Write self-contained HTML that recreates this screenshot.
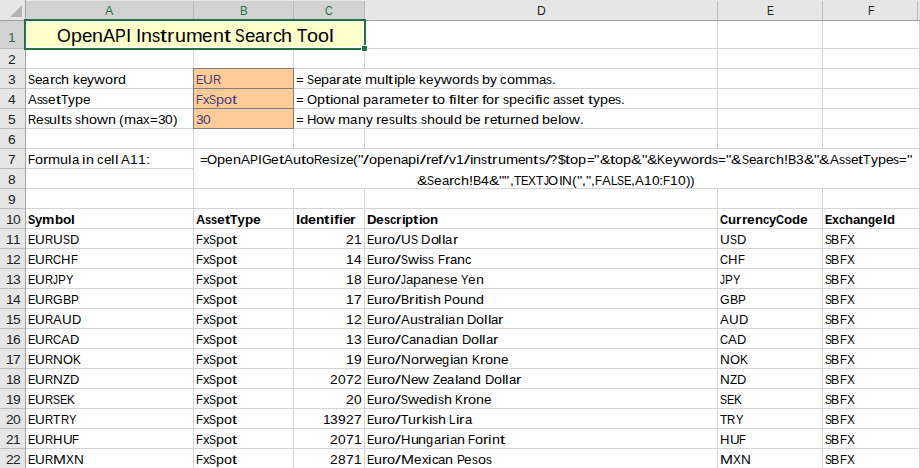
<!DOCTYPE html>
<html><head><meta charset="utf-8"><style>
html,body{margin:0;padding:0;background:#fff;}
body{width:920px;height:468px;overflow:hidden;position:relative;font-family:"Liberation Sans",sans-serif;}
.r{position:absolute;}
.t{position:absolute;white-space:nowrap;}
.t i{position:absolute;top:0;font-style:normal;transform-origin:0 0;}
</style></head><body>
<div class="r" style="left:0px;top:0px;width:920px;height:468px;background:#fff;"></div>
<div class="r" style="left:26px;top:48px;width:894px;height:1px;background:#d4d4d4;"></div>
<div class="r" style="left:26px;top:68px;width:894px;height:1px;background:#d4d4d4;"></div>
<div class="r" style="left:26px;top:88px;width:894px;height:1px;background:#d4d4d4;"></div>
<div class="r" style="left:26px;top:108px;width:894px;height:1px;background:#d4d4d4;"></div>
<div class="r" style="left:26px;top:128px;width:894px;height:1px;background:#d4d4d4;"></div>
<div class="r" style="left:26px;top:148px;width:894px;height:1px;background:#d4d4d4;"></div>
<div class="r" style="left:26px;top:168px;width:894px;height:1px;background:#d4d4d4;"></div>
<div class="r" style="left:26px;top:188px;width:894px;height:1px;background:#d4d4d4;"></div>
<div class="r" style="left:26px;top:208px;width:894px;height:1px;background:#d4d4d4;"></div>
<div class="r" style="left:26px;top:228px;width:894px;height:1px;background:#d4d4d4;"></div>
<div class="r" style="left:26px;top:248px;width:894px;height:1px;background:#d4d4d4;"></div>
<div class="r" style="left:26px;top:268px;width:894px;height:1px;background:#d4d4d4;"></div>
<div class="r" style="left:26px;top:288px;width:894px;height:1px;background:#d4d4d4;"></div>
<div class="r" style="left:26px;top:308px;width:894px;height:1px;background:#d4d4d4;"></div>
<div class="r" style="left:26px;top:328px;width:894px;height:1px;background:#d4d4d4;"></div>
<div class="r" style="left:26px;top:348px;width:894px;height:1px;background:#d4d4d4;"></div>
<div class="r" style="left:26px;top:368px;width:894px;height:1px;background:#d4d4d4;"></div>
<div class="r" style="left:26px;top:388px;width:894px;height:1px;background:#d4d4d4;"></div>
<div class="r" style="left:26px;top:408px;width:894px;height:1px;background:#d4d4d4;"></div>
<div class="r" style="left:26px;top:428px;width:894px;height:1px;background:#d4d4d4;"></div>
<div class="r" style="left:26px;top:448px;width:894px;height:1px;background:#d4d4d4;"></div>
<div class="r" style="left:193px;top:21px;width:1px;height:447px;background:#d4d4d4;"></div>
<div class="r" style="left:293px;top:21px;width:1px;height:447px;background:#d4d4d4;"></div>
<div class="r" style="left:364px;top:21px;width:1px;height:447px;background:#d4d4d4;"></div>
<div class="r" style="left:717px;top:21px;width:1px;height:447px;background:#d4d4d4;"></div>
<div class="r" style="left:822px;top:21px;width:1px;height:447px;background:#d4d4d4;"></div>
<div class="r" style="left:919px;top:21px;width:1px;height:447px;background:#d4d4d4;"></div>
<div class="r" style="left:364px;top:69px;width:1px;height:19px;background:#fff;"></div>
<div class="r" style="left:364px;top:89px;width:1px;height:19px;background:#fff;"></div>
<div class="r" style="left:364px;top:109px;width:1px;height:19px;background:#fff;"></div>
<div class="r" style="left:26px;top:21px;width:338px;height:27px;background:#ffffcc;"></div>
<div class="r" style="left:194px;top:149px;width:725px;height:39px;background:#fff;"></div>
<div class="r" style="left:193px;top:68px;width:101px;height:61px;background:#7f7f7f;"></div>
<div class="r" style="left:194px;top:69px;width:99px;height:19px;background:#ffcc99;"></div>
<div class="r" style="left:194px;top:89px;width:99px;height:19px;background:#ffcc99;"></div>
<div class="r" style="left:194px;top:109px;width:99px;height:19px;background:#ffcc99;"></div>
<div class="r" style="left:0px;top:0px;width:920px;height:20px;background:#e6e6e6;"></div>
<div class="r" style="left:26px;top:1px;width:338px;height:18px;background:#d2d2d2;"></div>
<div class="r" style="left:0px;top:20px;width:920px;height:1px;background:#a2a2a2;"></div>
<div class="r" style="left:193px;top:1px;width:1px;height:19px;background:#bababa;"></div>
<div class="r" style="left:293px;top:1px;width:1px;height:19px;background:#bababa;"></div>
<div class="r" style="left:364px;top:1px;width:1px;height:19px;background:#bababa;"></div>
<div class="r" style="left:717px;top:1px;width:1px;height:19px;background:#bababa;"></div>
<div class="r" style="left:822px;top:1px;width:1px;height:19px;background:#bababa;"></div>
<div class="r" style="left:917px;top:1px;width:1px;height:19px;background:#bababa;"></div>
<div class="r" style="left:0px;top:21px;width:25px;height:447px;background:#e6e6e6;"></div>
<div class="r" style="left:0px;top:21px;width:25px;height:27px;background:#d2d2d2;"></div>
<div class="r" style="left:25px;top:0px;width:1px;height:468px;background:#a2a2a2;"></div>
<div class="r" style="left:0px;top:48px;width:25px;height:1px;background:#bababa;"></div>
<div class="r" style="left:0px;top:68px;width:25px;height:1px;background:#bababa;"></div>
<div class="r" style="left:0px;top:88px;width:25px;height:1px;background:#bababa;"></div>
<div class="r" style="left:0px;top:108px;width:25px;height:1px;background:#bababa;"></div>
<div class="r" style="left:0px;top:128px;width:25px;height:1px;background:#bababa;"></div>
<div class="r" style="left:0px;top:148px;width:25px;height:1px;background:#bababa;"></div>
<div class="r" style="left:0px;top:168px;width:25px;height:1px;background:#bababa;"></div>
<div class="r" style="left:0px;top:188px;width:25px;height:1px;background:#bababa;"></div>
<div class="r" style="left:0px;top:208px;width:25px;height:1px;background:#bababa;"></div>
<div class="r" style="left:0px;top:228px;width:25px;height:1px;background:#bababa;"></div>
<div class="r" style="left:0px;top:248px;width:25px;height:1px;background:#bababa;"></div>
<div class="r" style="left:0px;top:268px;width:25px;height:1px;background:#bababa;"></div>
<div class="r" style="left:0px;top:288px;width:25px;height:1px;background:#bababa;"></div>
<div class="r" style="left:0px;top:308px;width:25px;height:1px;background:#bababa;"></div>
<div class="r" style="left:0px;top:328px;width:25px;height:1px;background:#bababa;"></div>
<div class="r" style="left:0px;top:348px;width:25px;height:1px;background:#bababa;"></div>
<div class="r" style="left:0px;top:368px;width:25px;height:1px;background:#bababa;"></div>
<div class="r" style="left:0px;top:388px;width:25px;height:1px;background:#bababa;"></div>
<div class="r" style="left:0px;top:408px;width:25px;height:1px;background:#bababa;"></div>
<div class="r" style="left:0px;top:428px;width:25px;height:1px;background:#bababa;"></div>
<div class="r" style="left:0px;top:448px;width:25px;height:1px;background:#bababa;"></div>
<svg class="r" style="left:0;top:0" width="25" height="20"><polygon points="10,17 22,17 22,5" fill="#b4b4b4"/></svg>
<span class="t" style="left:105.38px;top:3.84px;font-size:12px;line-height:14px;color:#217346;"><i style="left:0.00px;transform:scaleX(1.030)">A</i></span>
<span class="t" style="left:239.62px;top:3.84px;font-size:12px;line-height:14px;color:#217346;"><i style="left:0.00px;transform:scaleX(0.968)">B</i></span>
<span class="t" style="left:325.20px;top:3.84px;font-size:12px;line-height:14px;color:#217346;"><i style="left:0.00px;transform:scaleX(0.877)">C</i></span>
<span class="t" style="left:536.62px;top:3.84px;font-size:12px;line-height:14px;color:#222;"><i style="left:0.00px;transform:scaleX(1.012)">D</i></span>
<span class="t" style="left:766.52px;top:3.84px;font-size:12px;line-height:14px;color:#222;"><i style="left:0.00px;transform:scaleX(0.869)">E</i></span>
<span class="t" style="left:867.73px;top:3.84px;font-size:12px;line-height:14px;color:#222;"><i style="left:0.00px;transform:scaleX(0.893)">F</i></span>
<span class="t" style="left:8.16px;top:30.00px;font-size:13px;line-height:15px;color:#217346;"><i style="left:0.00px;transform:scaleX(1.062)">1</i></span>
<span class="t" style="left:8.16px;top:52.00px;font-size:13px;line-height:15px;color:#222;"><i style="left:0.00px;transform:scaleX(1.062)">2</i></span>
<span class="t" style="left:8.16px;top:72.00px;font-size:13px;line-height:15px;color:#222;"><i style="left:0.00px;transform:scaleX(1.062)">3</i></span>
<span class="t" style="left:8.16px;top:92.00px;font-size:13px;line-height:15px;color:#222;"><i style="left:0.00px;transform:scaleX(1.062)">4</i></span>
<span class="t" style="left:8.16px;top:112.00px;font-size:13px;line-height:15px;color:#222;"><i style="left:0.00px;transform:scaleX(1.062)">5</i></span>
<span class="t" style="left:8.16px;top:132.00px;font-size:13px;line-height:15px;color:#222;"><i style="left:0.00px;transform:scaleX(1.062)">6</i></span>
<span class="t" style="left:8.16px;top:152.00px;font-size:13px;line-height:15px;color:#222;"><i style="left:0.00px;transform:scaleX(1.062)">7</i></span>
<span class="t" style="left:8.16px;top:172.00px;font-size:13px;line-height:15px;color:#222;"><i style="left:0.00px;transform:scaleX(1.062)">8</i></span>
<span class="t" style="left:8.16px;top:192.00px;font-size:13px;line-height:15px;color:#222;"><i style="left:0.00px;transform:scaleX(1.062)">9</i></span>
<span class="t" style="left:5.72px;top:212.00px;font-size:13px;line-height:15px;color:#222;"><i style="left:0.00px;transform:scaleX(1.062)">1</i><i style="left:7.68px;transform:scaleX(1.062)">0</i></span>
<span class="t" style="left:5.72px;top:232.00px;font-size:13px;line-height:15px;color:#222;"><i style="left:0.00px;transform:scaleX(1.062)">1</i><i style="left:7.68px;transform:scaleX(1.062)">1</i></span>
<span class="t" style="left:5.72px;top:252.00px;font-size:13px;line-height:15px;color:#222;"><i style="left:0.00px;transform:scaleX(1.062)">1</i><i style="left:7.68px;transform:scaleX(1.062)">2</i></span>
<span class="t" style="left:5.72px;top:272.00px;font-size:13px;line-height:15px;color:#222;"><i style="left:0.00px;transform:scaleX(1.062)">1</i><i style="left:7.68px;transform:scaleX(1.062)">3</i></span>
<span class="t" style="left:5.72px;top:292.00px;font-size:13px;line-height:15px;color:#222;"><i style="left:0.00px;transform:scaleX(1.062)">1</i><i style="left:7.68px;transform:scaleX(1.062)">4</i></span>
<span class="t" style="left:5.72px;top:312.00px;font-size:13px;line-height:15px;color:#222;"><i style="left:0.00px;transform:scaleX(1.062)">1</i><i style="left:7.68px;transform:scaleX(1.062)">5</i></span>
<span class="t" style="left:5.72px;top:332.00px;font-size:13px;line-height:15px;color:#222;"><i style="left:0.00px;transform:scaleX(1.062)">1</i><i style="left:7.68px;transform:scaleX(1.062)">6</i></span>
<span class="t" style="left:5.72px;top:352.00px;font-size:13px;line-height:15px;color:#222;"><i style="left:0.00px;transform:scaleX(1.062)">1</i><i style="left:7.68px;transform:scaleX(1.062)">7</i></span>
<span class="t" style="left:5.72px;top:372.00px;font-size:13px;line-height:15px;color:#222;"><i style="left:0.00px;transform:scaleX(1.062)">1</i><i style="left:7.68px;transform:scaleX(1.062)">8</i></span>
<span class="t" style="left:5.72px;top:392.00px;font-size:13px;line-height:15px;color:#222;"><i style="left:0.00px;transform:scaleX(1.062)">1</i><i style="left:7.68px;transform:scaleX(1.062)">9</i></span>
<span class="t" style="left:5.72px;top:412.00px;font-size:13px;line-height:15px;color:#222;"><i style="left:0.00px;transform:scaleX(1.062)">2</i><i style="left:7.68px;transform:scaleX(1.062)">0</i></span>
<span class="t" style="left:5.72px;top:432.00px;font-size:13px;line-height:15px;color:#222;"><i style="left:0.00px;transform:scaleX(1.062)">2</i><i style="left:7.68px;transform:scaleX(1.062)">1</i></span>
<span class="t" style="left:5.72px;top:452.00px;font-size:13px;line-height:15px;color:#222;"><i style="left:0.00px;transform:scaleX(1.062)">2</i><i style="left:7.68px;transform:scaleX(1.062)">2</i></span>
<div class="r" style="left:24px;top:19px;width:342px;height:2px;background:#217346;"></div>
<div class="r" style="left:24px;top:19px;width:2px;height:31px;background:#217346;"></div>
<div class="r" style="left:364px;top:19px;width:2px;height:31px;background:#217346;"></div>
<div class="r" style="left:26px;top:21px;width:338px;height:1px;background:#fff;"></div>
<div class="r" style="left:26px;top:21px;width:1px;height:27px;background:#fff;"></div>
<div class="r" style="left:363px;top:21px;width:1px;height:27px;background:#fff;"></div>
<div class="r" style="left:26px;top:47px;width:338px;height:1px;background:#fff;"></div>
<div class="r" style="left:24px;top:48px;width:342px;height:2px;background:#217346;"></div>
<div class="r" style="left:361px;top:45px;width:7px;height:7px;background:#fff;"></div>
<div class="r" style="left:362px;top:46px;width:5px;height:5px;background:#217346;"></div>
<span class="t" style="left:57.10px;top:26.36px;font-size:18px;line-height:21px;color:#000;"><i style="left:0.00px;transform:scaleX(0.987)">O</i><i style="left:13.82px;transform:scaleX(1.095)">p</i><i style="left:24.78px;transform:scaleX(1.037)">e</i><i style="left:35.16px;transform:scaleX(1.095)">n</i><i style="left:46.13px;transform:scaleX(1.006)">A</i><i style="left:58.20px;transform:scaleX(0.898)">P</i><i style="left:68.98px;transform:scaleX(1.051)">I</i><i style="left:78.96px;transform:scaleX(1.051)">I</i><i style="left:84.21px;transform:scaleX(1.095)">n</i><i style="left:95.18px;transform:scaleX(0.907)">s</i><i style="left:103.34px;transform:scaleX(1.398)">t</i><i style="left:110.33px;transform:scaleX(1.214)">r</i><i style="left:117.60px;transform:scaleX(1.095)">u</i><i style="left:128.57px;transform:scaleX(1.112)">m</i><i style="left:145.23px;transform:scaleX(1.037)">e</i><i style="left:155.62px;transform:scaleX(1.095)">n</i><i style="left:166.58px;transform:scaleX(1.398)">t</i><i style="left:178.29px;transform:scaleX(0.799)">S</i><i style="left:187.88px;transform:scaleX(1.037)">e</i><i style="left:198.26px;transform:scaleX(0.998)">a</i><i style="left:208.25px;transform:scaleX(1.214)">r</i><i style="left:215.53px;transform:scaleX(0.980)">c</i><i style="left:224.35px;transform:scaleX(1.095)">h</i><i style="left:240.03px;transform:scaleX(0.925)">T</i><i style="left:250.20px;transform:scaleX(1.099)">o</i><i style="left:261.21px;transform:scaleX(1.099)">o</i><i style="left:272.21px;transform:scaleX(1.197)">l</i></span>
<span class="t" style="left:27.80px;top:72.00px;font-size:13px;line-height:15px;color:#000;"><i style="left:0.00px;transform:scaleX(0.803)">S</i><i style="left:6.96px;transform:scaleX(1.043)">e</i><i style="left:14.50px;transform:scaleX(1.004)">a</i><i style="left:21.76px;transform:scaleX(1.220)">r</i><i style="left:27.04px;transform:scaleX(0.986)">c</i><i style="left:33.44px;transform:scaleX(1.101)">h</i><i style="left:44.83px;transform:scaleX(1.060)">k</i><i style="left:51.72px;transform:scaleX(1.043)">e</i><i style="left:59.25px;transform:scaleX(1.055)">y</i><i style="left:66.11px;transform:scaleX(1.154)">w</i><i style="left:76.94px;transform:scaleX(1.105)">o</i><i style="left:84.93px;transform:scaleX(1.220)">r</i><i style="left:90.21px;transform:scaleX(1.101)">d</i></span>
<span class="t" style="left:27.80px;top:92.00px;font-size:13px;line-height:15px;color:#000;"><i style="left:0.00px;transform:scaleX(1.011)">A</i><i style="left:8.77px;transform:scaleX(0.912)">s</i><i style="left:14.69px;transform:scaleX(0.912)">s</i><i style="left:20.62px;transform:scaleX(1.043)">e</i><i style="left:28.15px;transform:scaleX(1.405)">t</i><i style="left:33.23px;transform:scaleX(0.930)">T</i><i style="left:40.61px;transform:scaleX(1.055)">y</i><i style="left:47.47px;transform:scaleX(1.101)">p</i><i style="left:55.43px;transform:scaleX(1.043)">e</i></span>
<span class="t" style="left:27.80px;top:112.00px;font-size:13px;line-height:15px;color:#000;"><i style="left:0.00px;transform:scaleX(0.876)">R</i><i style="left:8.23px;transform:scaleX(1.043)">e</i><i style="left:15.76px;transform:scaleX(0.912)">s</i><i style="left:21.69px;transform:scaleX(1.101)">u</i><i style="left:29.65px;transform:scaleX(1.204)">l</i><i style="left:33.13px;transform:scaleX(1.405)">t</i><i style="left:38.20px;transform:scaleX(0.912)">s</i><i style="left:47.55px;transform:scaleX(0.912)">s</i><i style="left:53.48px;transform:scaleX(1.101)">h</i><i style="left:61.44px;transform:scaleX(1.105)">o</i><i style="left:69.43px;transform:scaleX(1.154)">w</i><i style="left:80.26px;transform:scaleX(1.101)">n</i><i style="left:91.64px;transform:scaleX(1.061)">(</i><i style="left:96.23px;transform:scaleX(1.118)">m</i><i style="left:108.34px;transform:scaleX(1.004)">a</i><i style="left:115.59px;transform:scaleX(1.009)">x</i><i style="left:122.15px;transform:scaleX(1.011)">=</i><i style="left:129.83px;transform:scaleX(1.062)">3</i><i style="left:137.51px;transform:scaleX(1.062)">0</i><i style="left:145.19px;transform:scaleX(1.061)">)</i></span>
<span class="t" style="left:195.70px;top:72.00px;font-size:13px;line-height:15px;color:#3f3f76;"><i style="left:0.00px;transform:scaleX(0.853)">E</i><i style="left:7.40px;transform:scaleX(1.035)">U</i><i style="left:17.12px;transform:scaleX(0.876)">R</i></span>
<span class="t" style="left:195.70px;top:92.00px;font-size:13px;line-height:15px;color:#3f3f76;"><i style="left:0.00px;transform:scaleX(0.877)">F</i><i style="left:6.96px;transform:scaleX(1.009)">x</i><i style="left:13.52px;transform:scaleX(0.803)">S</i><i style="left:20.48px;transform:scaleX(1.101)">p</i><i style="left:28.44px;transform:scaleX(1.105)">o</i><i style="left:36.43px;transform:scaleX(1.405)">t</i></span>
<span class="t" style="left:195.70px;top:112.00px;font-size:13px;line-height:15px;color:#3f3f76;"><i style="left:0.00px;transform:scaleX(1.062)">3</i><i style="left:7.68px;transform:scaleX(1.062)">0</i></span>
<span class="t" style="left:295.50px;top:72.00px;font-size:13px;line-height:15px;color:#000;"><i style="left:0.00px;transform:scaleX(1.012)">=</i><i style="left:11.11px;transform:scaleX(0.803)">S</i><i style="left:18.07px;transform:scaleX(1.043)">e</i><i style="left:25.61px;transform:scaleX(1.101)">p</i><i style="left:33.57px;transform:scaleX(1.004)">a</i><i style="left:40.83px;transform:scaleX(1.220)">r</i><i style="left:46.11px;transform:scaleX(1.004)">a</i><i style="left:53.37px;transform:scaleX(1.405)">t</i><i style="left:58.45px;transform:scaleX(1.043)">e</i><i style="left:69.41px;transform:scaleX(1.118)">m</i><i style="left:81.52px;transform:scaleX(1.101)">u</i><i style="left:89.48px;transform:scaleX(1.204)">l</i><i style="left:92.96px;transform:scaleX(1.405)">t</i><i style="left:98.04px;transform:scaleX(1.204)">i</i><i style="left:101.51px;transform:scaleX(1.101)">p</i><i style="left:109.48px;transform:scaleX(1.204)">l</i><i style="left:112.95px;transform:scaleX(1.043)">e</i><i style="left:123.92px;transform:scaleX(1.060)">k</i><i style="left:130.81px;transform:scaleX(1.043)">e</i><i style="left:138.35px;transform:scaleX(1.055)">y</i><i style="left:145.21px;transform:scaleX(1.154)">w</i><i style="left:156.04px;transform:scaleX(1.105)">o</i><i style="left:164.03px;transform:scaleX(1.220)">r</i><i style="left:169.32px;transform:scaleX(1.101)">d</i><i style="left:177.28px;transform:scaleX(0.912)">s</i><i style="left:186.63px;transform:scaleX(1.101)">b</i><i style="left:194.59px;transform:scaleX(1.055)">y</i><i style="left:204.88px;transform:scaleX(0.986)">c</i><i style="left:211.29px;transform:scaleX(1.105)">o</i><i style="left:219.28px;transform:scaleX(1.118)">m</i><i style="left:231.38px;transform:scaleX(1.118)">m</i><i style="left:243.49px;transform:scaleX(1.004)">a</i><i style="left:250.75px;transform:scaleX(0.912)">s</i><i style="left:256.67px;transform:scaleX(1.059)">.</i></span>
<span class="t" style="left:295.50px;top:92.00px;font-size:13px;line-height:15px;color:#000;"><i style="left:0.00px;transform:scaleX(1.014)">=</i><i style="left:11.13px;transform:scaleX(0.994)">O</i><i style="left:21.18px;transform:scaleX(1.103)">p</i><i style="left:29.16px;transform:scaleX(1.408)">t</i><i style="left:34.25px;transform:scaleX(1.207)">i</i><i style="left:37.73px;transform:scaleX(1.108)">o</i><i style="left:45.74px;transform:scaleX(1.103)">n</i><i style="left:53.72px;transform:scaleX(1.006)">a</i><i style="left:60.99px;transform:scaleX(1.207)">l</i><i style="left:67.91px;transform:scaleX(1.103)">p</i><i style="left:75.89px;transform:scaleX(1.006)">a</i><i style="left:83.16px;transform:scaleX(1.223)">r</i><i style="left:88.46px;transform:scaleX(1.006)">a</i><i style="left:95.73px;transform:scaleX(1.120)">m</i><i style="left:107.86px;transform:scaleX(1.045)">e</i><i style="left:115.42px;transform:scaleX(1.408)">t</i><i style="left:120.50px;transform:scaleX(1.045)">e</i><i style="left:128.06px;transform:scaleX(1.223)">r</i><i style="left:136.79px;transform:scaleX(1.408)">t</i><i style="left:141.87px;transform:scaleX(1.108)">o</i><i style="left:153.31px;transform:scaleX(1.283)">f</i><i style="left:157.95px;transform:scaleX(1.207)">i</i><i style="left:161.43px;transform:scaleX(1.207)">l</i><i style="left:164.92px;transform:scaleX(1.408)">t</i><i style="left:170.00px;transform:scaleX(1.045)">e</i><i style="left:177.56px;transform:scaleX(1.223)">r</i><i style="left:186.29px;transform:scaleX(1.283)">f</i><i style="left:190.92px;transform:scaleX(1.108)">o</i><i style="left:198.93px;transform:scaleX(1.223)">r</i><i style="left:207.65px;transform:scaleX(0.914)">s</i><i style="left:213.59px;transform:scaleX(1.103)">p</i><i style="left:221.57px;transform:scaleX(1.045)">e</i><i style="left:229.13px;transform:scaleX(0.988)">c</i><i style="left:235.55px;transform:scaleX(1.207)">i</i><i style="left:239.03px;transform:scaleX(1.283)">f</i><i style="left:243.67px;transform:scaleX(1.207)">i</i><i style="left:247.15px;transform:scaleX(0.988)">c</i><i style="left:257.01px;transform:scaleX(1.006)">a</i><i style="left:264.28px;transform:scaleX(0.914)">s</i><i style="left:270.22px;transform:scaleX(0.914)">s</i><i style="left:276.16px;transform:scaleX(1.045)">e</i><i style="left:283.71px;transform:scaleX(1.408)">t</i><i style="left:292.23px;transform:scaleX(1.408)">t</i><i style="left:297.32px;transform:scaleX(1.057)">y</i><i style="left:304.19px;transform:scaleX(1.103)">p</i><i style="left:312.17px;transform:scaleX(1.045)">e</i><i style="left:319.73px;transform:scaleX(0.914)">s</i><i style="left:325.67px;transform:scaleX(1.061)">.</i></span>
<span class="t" style="left:295.50px;top:112.00px;font-size:13px;line-height:15px;color:#000;"><i style="left:0.00px;transform:scaleX(1.012)">=</i><i style="left:11.11px;transform:scaleX(1.006)">H</i><i style="left:20.56px;transform:scaleX(1.106)">o</i><i style="left:28.56px;transform:scaleX(1.155)">w</i><i style="left:42.82px;transform:scaleX(1.119)">m</i><i style="left:54.94px;transform:scaleX(1.005)">a</i><i style="left:62.20px;transform:scaleX(1.102)">n</i><i style="left:70.17px;transform:scaleX(1.056)">y</i><i style="left:80.46px;transform:scaleX(1.221)">r</i><i style="left:85.74px;transform:scaleX(1.044)">e</i><i style="left:93.29px;transform:scaleX(0.912)">s</i><i style="left:99.22px;transform:scaleX(1.102)">u</i><i style="left:107.19px;transform:scaleX(1.205)">l</i><i style="left:110.67px;transform:scaleX(1.406)">t</i><i style="left:115.75px;transform:scaleX(0.912)">s</i><i style="left:125.10px;transform:scaleX(0.912)">s</i><i style="left:131.03px;transform:scaleX(1.102)">h</i><i style="left:139.00px;transform:scaleX(1.106)">o</i><i style="left:147.00px;transform:scaleX(1.102)">u</i><i style="left:154.96px;transform:scaleX(1.205)">l</i><i style="left:158.44px;transform:scaleX(1.102)">d</i><i style="left:169.84px;transform:scaleX(1.102)">b</i><i style="left:177.80px;transform:scaleX(1.044)">e</i><i style="left:188.78px;transform:scaleX(1.221)">r</i><i style="left:194.06px;transform:scaleX(1.044)">e</i><i style="left:201.61px;transform:scaleX(1.406)">t</i><i style="left:206.69px;transform:scaleX(1.102)">u</i><i style="left:214.65px;transform:scaleX(1.221)">r</i><i style="left:219.94px;transform:scaleX(1.102)">n</i><i style="left:227.91px;transform:scaleX(1.044)">e</i><i style="left:235.45px;transform:scaleX(1.102)">d</i><i style="left:246.85px;transform:scaleX(1.102)">b</i><i style="left:254.81px;transform:scaleX(1.044)">e</i><i style="left:262.36px;transform:scaleX(1.205)">l</i><i style="left:265.84px;transform:scaleX(1.106)">o</i><i style="left:273.83px;transform:scaleX(1.155)">w</i><i style="left:284.67px;transform:scaleX(1.060)">.</i></span>
<span class="t" style="left:27.80px;top:152.00px;font-size:13px;line-height:15px;color:#000;"><i style="left:0.00px;transform:scaleX(0.877)">F</i><i style="left:6.96px;transform:scaleX(1.105)">o</i><i style="left:14.95px;transform:scaleX(1.220)">r</i><i style="left:20.23px;transform:scaleX(1.118)">m</i><i style="left:32.33px;transform:scaleX(1.101)">u</i><i style="left:40.29px;transform:scaleX(1.204)">l</i><i style="left:43.77px;transform:scaleX(1.004)">a</i><i style="left:54.45px;transform:scaleX(1.204)">i</i><i style="left:57.93px;transform:scaleX(1.101)">n</i><i style="left:69.31px;transform:scaleX(0.986)">c</i><i style="left:75.72px;transform:scaleX(1.043)">e</i><i style="left:83.26px;transform:scaleX(1.204)">l</i><i style="left:86.74px;transform:scaleX(1.204)">l</i><i style="left:93.64px;transform:scaleX(1.011)">A</i><i style="left:102.40px;transform:scaleX(1.062)">1</i><i style="left:110.08px;transform:scaleX(1.062)">1</i><i style="left:117.76px;transform:scaleX(1.122)">:</i></span>
<span class="t" style="left:199.50px;top:151.70px;font-size:13px;line-height:15px;color:#000;"><i style="left:0.00px;transform:scaleX(1.021)">=</i><i style="left:7.75px;transform:scaleX(1.001)">O</i><i style="left:17.87px;transform:scaleX(1.111)">p</i><i style="left:25.91px;transform:scaleX(1.052)">e</i><i style="left:33.52px;transform:scaleX(1.111)">n</i><i style="left:41.55px;transform:scaleX(1.020)">A</i><i style="left:50.40px;transform:scaleX(0.911)">P</i><i style="left:58.30px;transform:scaleX(1.067)">I</i><i style="left:62.15px;transform:scaleX(0.954)">G</i><i style="left:71.80px;transform:scaleX(1.052)">e</i><i style="left:79.41px;transform:scaleX(1.418)">t</i><i style="left:84.53px;transform:scaleX(1.020)">A</i><i style="left:93.38px;transform:scaleX(1.111)">u</i><i style="left:101.41px;transform:scaleX(1.418)">t</i><i style="left:106.53px;transform:scaleX(1.115)">o</i><i style="left:114.60px;transform:scaleX(0.884)">R</i><i style="left:122.90px;transform:scaleX(1.052)">e</i><i style="left:130.51px;transform:scaleX(0.920)">s</i><i style="left:136.49px;transform:scaleX(1.215)">i</i><i style="left:140.00px;transform:scaleX(0.929)">z</i><i style="left:146.04px;transform:scaleX(1.052)">e</i><i style="left:153.65px;transform:scaleX(1.071)">(</i><i style="left:158.28px;transform:scaleX(1.155)">&quot;</i><i style="left:163.61px;transform:scaleX(1.635)">/</i><i style="left:169.52px;transform:scaleX(1.115)">o</i><i style="left:177.58px;transform:scaleX(1.111)">p</i><i style="left:185.62px;transform:scaleX(1.052)">e</i><i style="left:193.23px;transform:scaleX(1.111)">n</i><i style="left:201.26px;transform:scaleX(1.013)">a</i><i style="left:208.58px;transform:scaleX(1.111)">p</i><i style="left:216.62px;transform:scaleX(1.215)">i</i><i style="left:220.13px;transform:scaleX(1.635)">/</i><i style="left:226.03px;transform:scaleX(1.231)">r</i><i style="left:231.36px;transform:scaleX(1.052)">e</i><i style="left:238.97px;transform:scaleX(1.292)">f</i><i style="left:243.64px;transform:scaleX(1.635)">/</i><i style="left:249.55px;transform:scaleX(1.063)">v</i><i style="left:256.45px;transform:scaleX(1.072)">1</i><i style="left:264.20px;transform:scaleX(1.635)">/</i><i style="left:270.11px;transform:scaleX(1.215)">i</i><i style="left:273.62px;transform:scaleX(1.111)">n</i><i style="left:281.65px;transform:scaleX(0.920)">s</i><i style="left:287.63px;transform:scaleX(1.418)">t</i><i style="left:292.75px;transform:scaleX(1.231)">r</i><i style="left:298.09px;transform:scaleX(1.111)">u</i><i style="left:306.12px;transform:scaleX(1.128)">m</i><i style="left:318.33px;transform:scaleX(1.052)">e</i><i style="left:325.94px;transform:scaleX(1.111)">n</i><i style="left:333.98px;transform:scaleX(1.418)">t</i><i style="left:339.10px;transform:scaleX(0.920)">s</i><i style="left:345.08px;transform:scaleX(1.635)">/</i><i style="left:350.99px;transform:scaleX(0.975)">?</i><i style="left:358.03px;transform:scaleX(1.072)">$</i><i style="left:365.78px;transform:scaleX(1.418)">t</i><i style="left:370.91px;transform:scaleX(1.115)">o</i><i style="left:378.97px;transform:scaleX(1.111)">p</i><i style="left:387.00px;transform:scaleX(1.021)">=</i><i style="left:394.75px;transform:scaleX(1.155)">&quot;</i><i style="left:400.09px;transform:scaleX(1.203)">&amp;</i><i style="left:410.52px;transform:scaleX(1.418)">t</i><i style="left:415.64px;transform:scaleX(1.115)">o</i><i style="left:423.70px;transform:scaleX(1.111)">p</i><i style="left:431.74px;transform:scaleX(1.203)">&amp;</i><i style="left:442.17px;transform:scaleX(1.155)">&quot;</i><i style="left:447.50px;transform:scaleX(1.203)">&amp;</i><i style="left:457.93px;transform:scaleX(0.916)">K</i><i style="left:465.87px;transform:scaleX(1.052)">e</i><i style="left:473.48px;transform:scaleX(1.065)">y</i><i style="left:480.40px;transform:scaleX(1.164)">w</i><i style="left:491.33px;transform:scaleX(1.115)">o</i><i style="left:499.40px;transform:scaleX(1.231)">r</i><i style="left:504.73px;transform:scaleX(1.111)">d</i><i style="left:512.76px;transform:scaleX(0.920)">s</i><i style="left:518.74px;transform:scaleX(1.021)">=</i><i style="left:526.49px;transform:scaleX(1.155)">&quot;</i><i style="left:531.82px;transform:scaleX(1.203)">&amp;</i><i style="left:542.26px;transform:scaleX(0.810)">S</i><i style="left:549.28px;transform:scaleX(1.052)">e</i><i style="left:556.89px;transform:scaleX(1.013)">a</i><i style="left:564.21px;transform:scaleX(1.231)">r</i><i style="left:569.55px;transform:scaleX(0.995)">c</i><i style="left:576.01px;transform:scaleX(1.111)">h</i><i style="left:584.05px;transform:scaleX(1.129)">!</i><i style="left:588.12px;transform:scaleX(0.959)">B</i><i style="left:596.44px;transform:scaleX(1.072)">3</i><i style="left:604.19px;transform:scaleX(1.203)">&amp;</i><i style="left:614.62px;transform:scaleX(1.155)">&quot;</i><i style="left:619.95px;transform:scaleX(1.203)">&amp;</i><i style="left:630.38px;transform:scaleX(1.020)">A</i><i style="left:639.23px;transform:scaleX(0.920)">s</i><i style="left:645.21px;transform:scaleX(0.920)">s</i><i style="left:651.19px;transform:scaleX(1.052)">e</i><i style="left:658.80px;transform:scaleX(1.418)">t</i><i style="left:663.92px;transform:scaleX(0.938)">T</i><i style="left:671.37px;transform:scaleX(1.065)">y</i><i style="left:678.30px;transform:scaleX(1.111)">p</i><i style="left:686.33px;transform:scaleX(1.052)">e</i><i style="left:693.94px;transform:scaleX(0.920)">s</i><i style="left:699.92px;transform:scaleX(1.021)">=</i><i style="left:707.67px;transform:scaleX(1.155)">&quot;</i></span>
<span class="t" style="left:417.00px;top:172.50px;font-size:13px;line-height:15px;color:#000;"><i style="left:0.00px;transform:scaleX(1.194)">&amp;</i><i style="left:10.35px;transform:scaleX(0.804)">S</i><i style="left:17.33px;transform:scaleX(1.045)">e</i><i style="left:24.88px;transform:scaleX(1.006)">a</i><i style="left:32.15px;transform:scaleX(1.222)">r</i><i style="left:37.44px;transform:scaleX(0.987)">c</i><i style="left:43.86px;transform:scaleX(1.103)">h</i><i style="left:51.83px;transform:scaleX(1.120)">!</i><i style="left:55.88px;transform:scaleX(0.952)">B</i><i style="left:64.13px;transform:scaleX(1.064)">4</i><i style="left:71.83px;transform:scaleX(1.194)">&amp;</i><i style="left:82.18px;transform:scaleX(1.147)">&quot;</i><i style="left:87.47px;transform:scaleX(1.147)">&quot;</i><i style="left:92.76px;transform:scaleX(1.049)">,</i><i style="left:96.55px;transform:scaleX(0.931)">T</i><i style="left:103.95px;transform:scaleX(0.855)">E</i><i style="left:111.36px;transform:scaleX(0.909)">X</i><i style="left:119.23px;transform:scaleX(0.931)">T</i><i style="left:126.63px;transform:scaleX(0.745)">J</i><i style="left:131.47px;transform:scaleX(0.994)">O</i><i style="left:141.52px;transform:scaleX(1.059)">I</i><i style="left:145.34px;transform:scaleX(1.044)">N</i><i style="left:155.14px;transform:scaleX(1.063)">(</i><i style="left:159.74px;transform:scaleX(1.147)">&quot;</i><i style="left:165.03px;transform:scaleX(1.049)">,</i><i style="left:168.82px;transform:scaleX(1.147)">&quot;</i><i style="left:174.11px;transform:scaleX(1.049)">,</i><i style="left:177.90px;transform:scaleX(0.878)">F</i><i style="left:184.87px;transform:scaleX(1.013)">A</i><i style="left:193.66px;transform:scaleX(0.883)">L</i><i style="left:200.04px;transform:scaleX(0.804)">S</i><i style="left:207.01px;transform:scaleX(0.855)">E</i><i style="left:214.42px;transform:scaleX(1.049)">,</i><i style="left:218.21px;transform:scaleX(1.013)">A</i><i style="left:226.99px;transform:scaleX(1.064)">1</i><i style="left:234.68px;transform:scaleX(1.064)">0</i><i style="left:242.38px;transform:scaleX(1.124)">:</i><i style="left:246.44px;transform:scaleX(0.878)">F</i><i style="left:253.41px;transform:scaleX(1.064)">1</i><i style="left:261.10px;transform:scaleX(1.064)">0</i><i style="left:268.80px;transform:scaleX(1.063)">)</i><i style="left:273.40px;transform:scaleX(1.063)">)</i></span>
<span class="t" style="left:27.80px;top:212.00px;font-size:13px;line-height:15px;color:#000;font-weight:bold;"><i style="left:0.00px;transform:scaleX(0.836)">S</i><i style="left:7.25px;transform:scaleX(1.002)">y</i><i style="left:14.49px;transform:scaleX(1.068)">m</i><i style="left:26.84px;transform:scaleX(1.032)">b</i><i style="left:35.03px;transform:scaleX(1.034)">o</i><i style="left:43.24px;transform:scaleX(1.040)">l</i></span>
<span class="t" style="left:195.70px;top:212.00px;font-size:13px;line-height:15px;color:#000;font-weight:bold;"><i style="left:0.00px;transform:scaleX(0.973)">A</i><i style="left:9.13px;transform:scaleX(0.843)">s</i><i style="left:15.22px;transform:scaleX(0.843)">s</i><i style="left:21.32px;transform:scaleX(1.064)">e</i><i style="left:29.01px;transform:scaleX(1.221)">t</i><i style="left:34.30px;transform:scaleX(0.957)">T</i><i style="left:41.89px;transform:scaleX(1.000)">y</i><i style="left:49.13px;transform:scaleX(1.030)">p</i><i style="left:57.31px;transform:scaleX(1.064)">e</i></span>
<span class="t" style="left:295.50px;top:212.00px;font-size:13px;line-height:15px;color:#000;font-weight:bold;"><i style="left:0.00px;transform:scaleX(1.158)">I</i><i style="left:4.18px;transform:scaleX(1.058)">d</i><i style="left:12.59px;transform:scaleX(1.094)">e</i><i style="left:20.49px;transform:scaleX(1.058)">n</i><i style="left:28.90px;transform:scaleX(1.255)">t</i><i style="left:34.33px;transform:scaleX(1.067)">i</i><i style="left:38.18px;transform:scaleX(1.147)">f</i><i style="left:43.15px;transform:scaleX(1.067)">i</i><i style="left:47.00px;transform:scaleX(1.094)">e</i><i style="left:54.91px;transform:scaleX(1.105)">r</i></span>
<span class="t" style="left:366.60px;top:212.00px;font-size:13px;line-height:15px;color:#000;font-weight:bold;"><i style="left:0.00px;transform:scaleX(1.016)">D</i><i style="left:9.54px;transform:scaleX(1.056)">e</i><i style="left:17.18px;transform:scaleX(0.836)">s</i><i style="left:23.22px;transform:scaleX(0.876)">c</i><i style="left:29.55px;transform:scaleX(1.067)">r</i><i style="left:34.95px;transform:scaleX(1.030)">i</i><i style="left:38.67px;transform:scaleX(1.022)">p</i><i style="left:46.79px;transform:scaleX(1.212)">t</i><i style="left:52.03px;transform:scaleX(1.030)">i</i><i style="left:55.76px;transform:scaleX(1.024)">o</i><i style="left:63.88px;transform:scaleX(1.022)">n</i></span>
<span class="t" style="left:720.10px;top:212.00px;font-size:13px;line-height:15px;color:#000;font-weight:bold;"><i style="left:0.00px;transform:scaleX(0.859)">C</i><i style="left:8.07px;transform:scaleX(1.019)">u</i><i style="left:16.16px;transform:scaleX(1.065)">r</i><i style="left:21.55px;transform:scaleX(1.065)">r</i><i style="left:26.93px;transform:scaleX(1.053)">e</i><i style="left:34.55px;transform:scaleX(1.019)">n</i><i style="left:42.64px;transform:scaleX(0.874)">c</i><i style="left:48.96px;transform:scaleX(0.990)">y</i><i style="left:56.12px;transform:scaleX(0.859)">C</i><i style="left:64.18px;transform:scaleX(1.021)">o</i><i style="left:72.29px;transform:scaleX(1.019)">d</i><i style="left:80.39px;transform:scaleX(1.053)">e</i></span>
<span class="t" style="left:824.50px;top:212.00px;font-size:13px;line-height:15px;color:#000;font-weight:bold;"><i style="left:0.00px;transform:scaleX(0.847)">E</i><i style="left:7.34px;transform:scaleX(0.950)">x</i><i style="left:14.21px;transform:scaleX(0.865)">c</i><i style="left:20.46px;transform:scaleX(1.009)">h</i><i style="left:28.48px;transform:scaleX(1.021)">a</i><i style="left:35.86px;transform:scaleX(1.009)">n</i><i style="left:43.87px;transform:scaleX(0.892)">g</i><i style="left:50.96px;transform:scaleX(1.043)">e</i><i style="left:58.50px;transform:scaleX(1.104)">I</i><i style="left:62.49px;transform:scaleX(1.009)">d</i></span>
<span class="t" style="left:27.80px;top:232.00px;font-size:13px;line-height:15px;color:#000;"><i style="left:0.00px;transform:scaleX(0.853)">E</i><i style="left:7.40px;transform:scaleX(1.035)">U</i><i style="left:17.12px;transform:scaleX(0.876)">R</i><i style="left:25.34px;transform:scaleX(1.035)">U</i><i style="left:35.06px;transform:scaleX(0.803)">S</i><i style="left:42.02px;transform:scaleX(0.993)">D</i></span>
<span class="t" style="left:195.70px;top:232.00px;font-size:13px;line-height:15px;color:#000;"><i style="left:0.00px;transform:scaleX(0.877)">F</i><i style="left:6.96px;transform:scaleX(1.009)">x</i><i style="left:13.52px;transform:scaleX(0.803)">S</i><i style="left:20.48px;transform:scaleX(1.101)">p</i><i style="left:28.44px;transform:scaleX(1.105)">o</i><i style="left:36.43px;transform:scaleX(1.405)">t</i></span>
<span class="t" style="left:345.84px;top:232.00px;font-size:13px;line-height:15px;color:#000;"><i style="left:0.00px;transform:scaleX(1.062)">2</i><i style="left:7.68px;transform:scaleX(1.062)">1</i></span>
<span class="t" style="left:366.60px;top:232.00px;font-size:13px;line-height:15px;color:#000;"><i style="left:0.00px;transform:scaleX(0.853)">E</i><i style="left:7.40px;transform:scaleX(1.101)">u</i><i style="left:15.36px;transform:scaleX(1.220)">r</i><i style="left:20.64px;transform:scaleX(1.105)">o</i><i style="left:28.63px;transform:scaleX(1.620)">/</i><i style="left:34.48px;transform:scaleX(1.035)">U</i><i style="left:44.20px;transform:scaleX(0.803)">S</i><i style="left:54.59px;transform:scaleX(0.993)">D</i><i style="left:63.91px;transform:scaleX(1.105)">o</i><i style="left:71.90px;transform:scaleX(1.204)">l</i><i style="left:75.37px;transform:scaleX(1.204)">l</i><i style="left:78.85px;transform:scaleX(1.004)">a</i><i style="left:86.11px;transform:scaleX(1.220)">r</i></span>
<span class="t" style="left:720.10px;top:232.00px;font-size:13px;line-height:15px;color:#000;"><i style="left:0.00px;transform:scaleX(1.035)">U</i><i style="left:9.72px;transform:scaleX(0.803)">S</i><i style="left:16.68px;transform:scaleX(0.993)">D</i></span>
<span class="t" style="left:824.50px;top:232.00px;font-size:13px;line-height:15px;color:#000;"><i style="left:0.00px;transform:scaleX(0.803)">S</i><i style="left:6.96px;transform:scaleX(0.950)">B</i><i style="left:15.20px;transform:scaleX(0.877)">F</i><i style="left:22.16px;transform:scaleX(0.907)">X</i></span>
<span class="t" style="left:27.80px;top:252.00px;font-size:13px;line-height:15px;color:#000;"><i style="left:0.00px;transform:scaleX(0.853)">E</i><i style="left:7.40px;transform:scaleX(1.035)">U</i><i style="left:17.12px;transform:scaleX(0.876)">R</i><i style="left:25.34px;transform:scaleX(0.860)">C</i><i style="left:33.42px;transform:scaleX(1.005)">H</i><i style="left:42.86px;transform:scaleX(0.877)">F</i></span>
<span class="t" style="left:195.70px;top:252.00px;font-size:13px;line-height:15px;color:#000;"><i style="left:0.00px;transform:scaleX(0.877)">F</i><i style="left:6.96px;transform:scaleX(1.009)">x</i><i style="left:13.52px;transform:scaleX(0.803)">S</i><i style="left:20.48px;transform:scaleX(1.101)">p</i><i style="left:28.44px;transform:scaleX(1.105)">o</i><i style="left:36.43px;transform:scaleX(1.405)">t</i></span>
<span class="t" style="left:345.84px;top:252.00px;font-size:13px;line-height:15px;color:#000;"><i style="left:0.00px;transform:scaleX(1.062)">1</i><i style="left:7.68px;transform:scaleX(1.062)">4</i></span>
<span class="t" style="left:366.60px;top:252.00px;font-size:13px;line-height:15px;color:#000;"><i style="left:0.00px;transform:scaleX(0.853)">E</i><i style="left:7.40px;transform:scaleX(1.101)">u</i><i style="left:15.36px;transform:scaleX(1.220)">r</i><i style="left:20.64px;transform:scaleX(1.105)">o</i><i style="left:28.63px;transform:scaleX(1.620)">/</i><i style="left:34.48px;transform:scaleX(0.803)">S</i><i style="left:41.44px;transform:scaleX(1.154)">w</i><i style="left:52.27px;transform:scaleX(1.204)">i</i><i style="left:55.75px;transform:scaleX(0.912)">s</i><i style="left:61.67px;transform:scaleX(0.912)">s</i><i style="left:71.02px;transform:scaleX(0.877)">F</i><i style="left:77.98px;transform:scaleX(1.220)">r</i><i style="left:83.27px;transform:scaleX(1.004)">a</i><i style="left:90.52px;transform:scaleX(1.101)">n</i><i style="left:98.48px;transform:scaleX(0.986)">c</i></span>
<span class="t" style="left:720.10px;top:252.00px;font-size:13px;line-height:15px;color:#000;"><i style="left:0.00px;transform:scaleX(0.860)">C</i><i style="left:8.08px;transform:scaleX(1.005)">H</i><i style="left:17.52px;transform:scaleX(0.877)">F</i></span>
<span class="t" style="left:824.50px;top:252.00px;font-size:13px;line-height:15px;color:#000;"><i style="left:0.00px;transform:scaleX(0.803)">S</i><i style="left:6.96px;transform:scaleX(0.950)">B</i><i style="left:15.20px;transform:scaleX(0.877)">F</i><i style="left:22.16px;transform:scaleX(0.907)">X</i></span>
<span class="t" style="left:27.80px;top:272.00px;font-size:13px;line-height:15px;color:#000;"><i style="left:0.00px;transform:scaleX(0.853)">E</i><i style="left:7.40px;transform:scaleX(1.035)">U</i><i style="left:17.12px;transform:scaleX(0.876)">R</i><i style="left:25.34px;transform:scaleX(0.743)">J</i><i style="left:30.17px;transform:scaleX(0.903)">P</i><i style="left:38.00px;transform:scaleX(0.851)">Y</i></span>
<span class="t" style="left:195.70px;top:272.00px;font-size:13px;line-height:15px;color:#000;"><i style="left:0.00px;transform:scaleX(0.877)">F</i><i style="left:6.96px;transform:scaleX(1.009)">x</i><i style="left:13.52px;transform:scaleX(0.803)">S</i><i style="left:20.48px;transform:scaleX(1.101)">p</i><i style="left:28.44px;transform:scaleX(1.105)">o</i><i style="left:36.43px;transform:scaleX(1.405)">t</i></span>
<span class="t" style="left:345.84px;top:272.00px;font-size:13px;line-height:15px;color:#000;"><i style="left:0.00px;transform:scaleX(1.062)">1</i><i style="left:7.68px;transform:scaleX(1.062)">8</i></span>
<span class="t" style="left:366.60px;top:272.00px;font-size:13px;line-height:15px;color:#000;"><i style="left:0.00px;transform:scaleX(0.853)">E</i><i style="left:7.40px;transform:scaleX(1.101)">u</i><i style="left:15.36px;transform:scaleX(1.220)">r</i><i style="left:20.64px;transform:scaleX(1.105)">o</i><i style="left:28.63px;transform:scaleX(1.620)">/</i><i style="left:34.48px;transform:scaleX(0.743)">J</i><i style="left:39.31px;transform:scaleX(1.004)">a</i><i style="left:46.57px;transform:scaleX(1.101)">p</i><i style="left:54.53px;transform:scaleX(1.004)">a</i><i style="left:61.78px;transform:scaleX(1.101)">n</i><i style="left:69.74px;transform:scaleX(1.043)">e</i><i style="left:77.28px;transform:scaleX(0.912)">s</i><i style="left:83.21px;transform:scaleX(1.043)">e</i><i style="left:94.17px;transform:scaleX(0.851)">Y</i><i style="left:101.55px;transform:scaleX(1.043)">e</i><i style="left:109.09px;transform:scaleX(1.101)">n</i></span>
<span class="t" style="left:720.10px;top:272.00px;font-size:13px;line-height:15px;color:#000;"><i style="left:0.00px;transform:scaleX(0.743)">J</i><i style="left:4.83px;transform:scaleX(0.903)">P</i><i style="left:12.66px;transform:scaleX(0.851)">Y</i></span>
<span class="t" style="left:824.50px;top:272.00px;font-size:13px;line-height:15px;color:#000;"><i style="left:0.00px;transform:scaleX(0.803)">S</i><i style="left:6.96px;transform:scaleX(0.950)">B</i><i style="left:15.20px;transform:scaleX(0.877)">F</i><i style="left:22.16px;transform:scaleX(0.907)">X</i></span>
<span class="t" style="left:27.80px;top:292.00px;font-size:13px;line-height:15px;color:#000;"><i style="left:0.00px;transform:scaleX(0.853)">E</i><i style="left:7.40px;transform:scaleX(1.035)">U</i><i style="left:17.12px;transform:scaleX(0.876)">R</i><i style="left:25.34px;transform:scaleX(0.945)">G</i><i style="left:34.90px;transform:scaleX(0.950)">B</i><i style="left:43.14px;transform:scaleX(0.903)">P</i></span>
<span class="t" style="left:195.70px;top:292.00px;font-size:13px;line-height:15px;color:#000;"><i style="left:0.00px;transform:scaleX(0.877)">F</i><i style="left:6.96px;transform:scaleX(1.009)">x</i><i style="left:13.52px;transform:scaleX(0.803)">S</i><i style="left:20.48px;transform:scaleX(1.101)">p</i><i style="left:28.44px;transform:scaleX(1.105)">o</i><i style="left:36.43px;transform:scaleX(1.405)">t</i></span>
<span class="t" style="left:345.84px;top:292.00px;font-size:13px;line-height:15px;color:#000;"><i style="left:0.00px;transform:scaleX(1.062)">1</i><i style="left:7.68px;transform:scaleX(1.062)">7</i></span>
<span class="t" style="left:366.60px;top:292.00px;font-size:13px;line-height:15px;color:#000;"><i style="left:0.00px;transform:scaleX(0.853)">E</i><i style="left:7.40px;transform:scaleX(1.101)">u</i><i style="left:15.36px;transform:scaleX(1.220)">r</i><i style="left:20.64px;transform:scaleX(1.105)">o</i><i style="left:28.63px;transform:scaleX(1.620)">/</i><i style="left:34.48px;transform:scaleX(0.950)">B</i><i style="left:42.72px;transform:scaleX(1.220)">r</i><i style="left:48.00px;transform:scaleX(1.204)">i</i><i style="left:51.48px;transform:scaleX(1.405)">t</i><i style="left:56.55px;transform:scaleX(1.204)">i</i><i style="left:60.03px;transform:scaleX(0.912)">s</i><i style="left:65.96px;transform:scaleX(1.101)">h</i><i style="left:77.34px;transform:scaleX(0.903)">P</i><i style="left:85.17px;transform:scaleX(1.105)">o</i><i style="left:93.16px;transform:scaleX(1.101)">u</i><i style="left:101.12px;transform:scaleX(1.101)">n</i><i style="left:109.08px;transform:scaleX(1.101)">d</i></span>
<span class="t" style="left:720.10px;top:292.00px;font-size:13px;line-height:15px;color:#000;"><i style="left:0.00px;transform:scaleX(0.945)">G</i><i style="left:9.56px;transform:scaleX(0.950)">B</i><i style="left:17.80px;transform:scaleX(0.903)">P</i></span>
<span class="t" style="left:824.50px;top:292.00px;font-size:13px;line-height:15px;color:#000;"><i style="left:0.00px;transform:scaleX(0.803)">S</i><i style="left:6.96px;transform:scaleX(0.950)">B</i><i style="left:15.20px;transform:scaleX(0.877)">F</i><i style="left:22.16px;transform:scaleX(0.907)">X</i></span>
<span class="t" style="left:27.80px;top:312.00px;font-size:13px;line-height:15px;color:#000;"><i style="left:0.00px;transform:scaleX(0.853)">E</i><i style="left:7.40px;transform:scaleX(1.035)">U</i><i style="left:17.12px;transform:scaleX(0.876)">R</i><i style="left:25.34px;transform:scaleX(1.011)">A</i><i style="left:34.11px;transform:scaleX(1.035)">U</i><i style="left:43.83px;transform:scaleX(0.993)">D</i></span>
<span class="t" style="left:195.70px;top:312.00px;font-size:13px;line-height:15px;color:#000;"><i style="left:0.00px;transform:scaleX(0.877)">F</i><i style="left:6.96px;transform:scaleX(1.009)">x</i><i style="left:13.52px;transform:scaleX(0.803)">S</i><i style="left:20.48px;transform:scaleX(1.101)">p</i><i style="left:28.44px;transform:scaleX(1.105)">o</i><i style="left:36.43px;transform:scaleX(1.405)">t</i></span>
<span class="t" style="left:345.84px;top:312.00px;font-size:13px;line-height:15px;color:#000;"><i style="left:0.00px;transform:scaleX(1.062)">1</i><i style="left:7.68px;transform:scaleX(1.062)">2</i></span>
<span class="t" style="left:366.60px;top:312.00px;font-size:13px;line-height:15px;color:#000;"><i style="left:0.00px;transform:scaleX(0.853)">E</i><i style="left:7.40px;transform:scaleX(1.101)">u</i><i style="left:15.36px;transform:scaleX(1.220)">r</i><i style="left:20.64px;transform:scaleX(1.105)">o</i><i style="left:28.63px;transform:scaleX(1.620)">/</i><i style="left:34.48px;transform:scaleX(1.011)">A</i><i style="left:43.25px;transform:scaleX(1.101)">u</i><i style="left:51.21px;transform:scaleX(0.912)">s</i><i style="left:57.13px;transform:scaleX(1.405)">t</i><i style="left:62.21px;transform:scaleX(1.220)">r</i><i style="left:67.49px;transform:scaleX(1.004)">a</i><i style="left:74.74px;transform:scaleX(1.204)">l</i><i style="left:78.22px;transform:scaleX(1.204)">i</i><i style="left:81.70px;transform:scaleX(1.004)">a</i><i style="left:88.95px;transform:scaleX(1.101)">n</i><i style="left:100.34px;transform:scaleX(0.993)">D</i><i style="left:109.66px;transform:scaleX(1.105)">o</i><i style="left:117.65px;transform:scaleX(1.204)">l</i><i style="left:121.13px;transform:scaleX(1.204)">l</i><i style="left:124.60px;transform:scaleX(1.004)">a</i><i style="left:131.86px;transform:scaleX(1.220)">r</i></span>
<span class="t" style="left:720.10px;top:312.00px;font-size:13px;line-height:15px;color:#000;"><i style="left:0.00px;transform:scaleX(1.011)">A</i><i style="left:8.77px;transform:scaleX(1.035)">U</i><i style="left:18.49px;transform:scaleX(0.993)">D</i></span>
<span class="t" style="left:824.50px;top:312.00px;font-size:13px;line-height:15px;color:#000;"><i style="left:0.00px;transform:scaleX(0.803)">S</i><i style="left:6.96px;transform:scaleX(0.950)">B</i><i style="left:15.20px;transform:scaleX(0.877)">F</i><i style="left:22.16px;transform:scaleX(0.907)">X</i></span>
<span class="t" style="left:27.80px;top:332.00px;font-size:13px;line-height:15px;color:#000;"><i style="left:0.00px;transform:scaleX(0.853)">E</i><i style="left:7.40px;transform:scaleX(1.035)">U</i><i style="left:17.12px;transform:scaleX(0.876)">R</i><i style="left:25.34px;transform:scaleX(0.860)">C</i><i style="left:33.42px;transform:scaleX(1.011)">A</i><i style="left:42.19px;transform:scaleX(0.993)">D</i></span>
<span class="t" style="left:195.70px;top:332.00px;font-size:13px;line-height:15px;color:#000;"><i style="left:0.00px;transform:scaleX(0.877)">F</i><i style="left:6.96px;transform:scaleX(1.009)">x</i><i style="left:13.52px;transform:scaleX(0.803)">S</i><i style="left:20.48px;transform:scaleX(1.101)">p</i><i style="left:28.44px;transform:scaleX(1.105)">o</i><i style="left:36.43px;transform:scaleX(1.405)">t</i></span>
<span class="t" style="left:345.84px;top:332.00px;font-size:13px;line-height:15px;color:#000;"><i style="left:0.00px;transform:scaleX(1.062)">1</i><i style="left:7.68px;transform:scaleX(1.062)">3</i></span>
<span class="t" style="left:366.60px;top:332.00px;font-size:13px;line-height:15px;color:#000;"><i style="left:0.00px;transform:scaleX(0.853)">E</i><i style="left:7.40px;transform:scaleX(1.101)">u</i><i style="left:15.36px;transform:scaleX(1.220)">r</i><i style="left:20.64px;transform:scaleX(1.105)">o</i><i style="left:28.63px;transform:scaleX(1.620)">/</i><i style="left:34.48px;transform:scaleX(0.860)">C</i><i style="left:42.56px;transform:scaleX(1.004)">a</i><i style="left:49.81px;transform:scaleX(1.101)">n</i><i style="left:57.77px;transform:scaleX(1.004)">a</i><i style="left:65.03px;transform:scaleX(1.101)">d</i><i style="left:72.99px;transform:scaleX(1.204)">i</i><i style="left:76.47px;transform:scaleX(1.004)">a</i><i style="left:83.72px;transform:scaleX(1.101)">n</i><i style="left:95.11px;transform:scaleX(0.993)">D</i><i style="left:104.43px;transform:scaleX(1.105)">o</i><i style="left:112.42px;transform:scaleX(1.204)">l</i><i style="left:115.90px;transform:scaleX(1.204)">l</i><i style="left:119.37px;transform:scaleX(1.004)">a</i><i style="left:126.63px;transform:scaleX(1.220)">r</i></span>
<span class="t" style="left:720.10px;top:332.00px;font-size:13px;line-height:15px;color:#000;"><i style="left:0.00px;transform:scaleX(0.860)">C</i><i style="left:8.08px;transform:scaleX(1.011)">A</i><i style="left:16.84px;transform:scaleX(0.993)">D</i></span>
<span class="t" style="left:824.50px;top:332.00px;font-size:13px;line-height:15px;color:#000;"><i style="left:0.00px;transform:scaleX(0.803)">S</i><i style="left:6.96px;transform:scaleX(0.950)">B</i><i style="left:15.20px;transform:scaleX(0.877)">F</i><i style="left:22.16px;transform:scaleX(0.907)">X</i></span>
<span class="t" style="left:27.80px;top:352.00px;font-size:13px;line-height:15px;color:#000;"><i style="left:0.00px;transform:scaleX(0.853)">E</i><i style="left:7.40px;transform:scaleX(1.035)">U</i><i style="left:17.12px;transform:scaleX(0.876)">R</i><i style="left:25.34px;transform:scaleX(1.042)">N</i><i style="left:35.12px;transform:scaleX(0.992)">O</i><i style="left:45.15px;transform:scaleX(0.908)">K</i></span>
<span class="t" style="left:195.70px;top:352.00px;font-size:13px;line-height:15px;color:#000;"><i style="left:0.00px;transform:scaleX(0.877)">F</i><i style="left:6.96px;transform:scaleX(1.009)">x</i><i style="left:13.52px;transform:scaleX(0.803)">S</i><i style="left:20.48px;transform:scaleX(1.101)">p</i><i style="left:28.44px;transform:scaleX(1.105)">o</i><i style="left:36.43px;transform:scaleX(1.405)">t</i></span>
<span class="t" style="left:345.84px;top:352.00px;font-size:13px;line-height:15px;color:#000;"><i style="left:0.00px;transform:scaleX(1.062)">1</i><i style="left:7.68px;transform:scaleX(1.062)">9</i></span>
<span class="t" style="left:366.60px;top:352.00px;font-size:13px;line-height:15px;color:#000;"><i style="left:0.00px;transform:scaleX(0.853)">E</i><i style="left:7.40px;transform:scaleX(1.101)">u</i><i style="left:15.36px;transform:scaleX(1.220)">r</i><i style="left:20.64px;transform:scaleX(1.105)">o</i><i style="left:28.63px;transform:scaleX(1.620)">/</i><i style="left:34.48px;transform:scaleX(1.042)">N</i><i style="left:44.26px;transform:scaleX(1.105)">o</i><i style="left:52.25px;transform:scaleX(1.220)">r</i><i style="left:57.53px;transform:scaleX(1.154)">w</i><i style="left:68.36px;transform:scaleX(1.043)">e</i><i style="left:75.90px;transform:scaleX(0.986)">g</i><i style="left:83.03px;transform:scaleX(1.204)">i</i><i style="left:86.51px;transform:scaleX(1.004)">a</i><i style="left:93.76px;transform:scaleX(1.101)">n</i><i style="left:105.15px;transform:scaleX(0.908)">K</i><i style="left:113.02px;transform:scaleX(1.220)">r</i><i style="left:118.30px;transform:scaleX(1.105)">o</i><i style="left:126.29px;transform:scaleX(1.101)">n</i><i style="left:134.25px;transform:scaleX(1.043)">e</i></span>
<span class="t" style="left:720.10px;top:352.00px;font-size:13px;line-height:15px;color:#000;"><i style="left:0.00px;transform:scaleX(1.042)">N</i><i style="left:9.78px;transform:scaleX(0.992)">O</i><i style="left:19.81px;transform:scaleX(0.908)">K</i></span>
<span class="t" style="left:824.50px;top:352.00px;font-size:13px;line-height:15px;color:#000;"><i style="left:0.00px;transform:scaleX(0.803)">S</i><i style="left:6.96px;transform:scaleX(0.950)">B</i><i style="left:15.20px;transform:scaleX(0.877)">F</i><i style="left:22.16px;transform:scaleX(0.907)">X</i></span>
<span class="t" style="left:27.80px;top:372.00px;font-size:13px;line-height:15px;color:#000;"><i style="left:0.00px;transform:scaleX(0.853)">E</i><i style="left:7.40px;transform:scaleX(1.035)">U</i><i style="left:17.12px;transform:scaleX(0.876)">R</i><i style="left:25.34px;transform:scaleX(1.042)">N</i><i style="left:35.12px;transform:scaleX(0.893)">Z</i><i style="left:42.22px;transform:scaleX(0.993)">D</i></span>
<span class="t" style="left:195.70px;top:372.00px;font-size:13px;line-height:15px;color:#000;"><i style="left:0.00px;transform:scaleX(0.877)">F</i><i style="left:6.96px;transform:scaleX(1.009)">x</i><i style="left:13.52px;transform:scaleX(0.803)">S</i><i style="left:20.48px;transform:scaleX(1.101)">p</i><i style="left:28.44px;transform:scaleX(1.105)">o</i><i style="left:36.43px;transform:scaleX(1.405)">t</i></span>
<span class="t" style="left:330.49px;top:372.00px;font-size:13px;line-height:15px;color:#000;"><i style="left:0.00px;transform:scaleX(1.062)">2</i><i style="left:7.68px;transform:scaleX(1.062)">0</i><i style="left:15.36px;transform:scaleX(1.062)">7</i><i style="left:23.04px;transform:scaleX(1.062)">2</i></span>
<span class="t" style="left:366.60px;top:372.00px;font-size:13px;line-height:15px;color:#000;"><i style="left:0.00px;transform:scaleX(0.853)">E</i><i style="left:7.40px;transform:scaleX(1.101)">u</i><i style="left:15.36px;transform:scaleX(1.220)">r</i><i style="left:20.64px;transform:scaleX(1.105)">o</i><i style="left:28.63px;transform:scaleX(1.620)">/</i><i style="left:34.48px;transform:scaleX(1.042)">N</i><i style="left:44.26px;transform:scaleX(1.043)">e</i><i style="left:51.80px;transform:scaleX(1.154)">w</i><i style="left:66.05px;transform:scaleX(0.893)">Z</i><i style="left:73.15px;transform:scaleX(1.043)">e</i><i style="left:80.68px;transform:scaleX(1.004)">a</i><i style="left:87.94px;transform:scaleX(1.204)">l</i><i style="left:91.42px;transform:scaleX(1.004)">a</i><i style="left:98.67px;transform:scaleX(1.101)">n</i><i style="left:106.63px;transform:scaleX(1.101)">d</i><i style="left:118.02px;transform:scaleX(0.993)">D</i><i style="left:127.34px;transform:scaleX(1.105)">o</i><i style="left:135.33px;transform:scaleX(1.204)">l</i><i style="left:138.81px;transform:scaleX(1.204)">l</i><i style="left:142.28px;transform:scaleX(1.004)">a</i><i style="left:149.54px;transform:scaleX(1.220)">r</i></span>
<span class="t" style="left:720.10px;top:372.00px;font-size:13px;line-height:15px;color:#000;"><i style="left:0.00px;transform:scaleX(1.042)">N</i><i style="left:9.78px;transform:scaleX(0.893)">Z</i><i style="left:16.87px;transform:scaleX(0.993)">D</i></span>
<span class="t" style="left:824.50px;top:372.00px;font-size:13px;line-height:15px;color:#000;"><i style="left:0.00px;transform:scaleX(0.803)">S</i><i style="left:6.96px;transform:scaleX(0.950)">B</i><i style="left:15.20px;transform:scaleX(0.877)">F</i><i style="left:22.16px;transform:scaleX(0.907)">X</i></span>
<span class="t" style="left:27.80px;top:392.00px;font-size:13px;line-height:15px;color:#000;"><i style="left:0.00px;transform:scaleX(0.853)">E</i><i style="left:7.40px;transform:scaleX(1.035)">U</i><i style="left:17.12px;transform:scaleX(0.876)">R</i><i style="left:25.34px;transform:scaleX(0.803)">S</i><i style="left:32.30px;transform:scaleX(0.853)">E</i><i style="left:39.70px;transform:scaleX(0.908)">K</i></span>
<span class="t" style="left:195.70px;top:392.00px;font-size:13px;line-height:15px;color:#000;"><i style="left:0.00px;transform:scaleX(0.877)">F</i><i style="left:6.96px;transform:scaleX(1.009)">x</i><i style="left:13.52px;transform:scaleX(0.803)">S</i><i style="left:20.48px;transform:scaleX(1.101)">p</i><i style="left:28.44px;transform:scaleX(1.105)">o</i><i style="left:36.43px;transform:scaleX(1.405)">t</i></span>
<span class="t" style="left:345.84px;top:392.00px;font-size:13px;line-height:15px;color:#000;"><i style="left:0.00px;transform:scaleX(1.062)">2</i><i style="left:7.68px;transform:scaleX(1.062)">0</i></span>
<span class="t" style="left:366.60px;top:392.00px;font-size:13px;line-height:15px;color:#000;"><i style="left:0.00px;transform:scaleX(0.853)">E</i><i style="left:7.40px;transform:scaleX(1.101)">u</i><i style="left:15.36px;transform:scaleX(1.220)">r</i><i style="left:20.64px;transform:scaleX(1.105)">o</i><i style="left:28.63px;transform:scaleX(1.620)">/</i><i style="left:34.48px;transform:scaleX(0.803)">S</i><i style="left:41.44px;transform:scaleX(1.154)">w</i><i style="left:52.27px;transform:scaleX(1.043)">e</i><i style="left:59.81px;transform:scaleX(1.101)">d</i><i style="left:67.77px;transform:scaleX(1.204)">i</i><i style="left:71.24px;transform:scaleX(0.912)">s</i><i style="left:77.17px;transform:scaleX(1.101)">h</i><i style="left:88.56px;transform:scaleX(0.908)">K</i><i style="left:96.43px;transform:scaleX(1.220)">r</i><i style="left:101.71px;transform:scaleX(1.105)">o</i><i style="left:109.70px;transform:scaleX(1.101)">n</i><i style="left:117.66px;transform:scaleX(1.043)">e</i></span>
<span class="t" style="left:720.10px;top:392.00px;font-size:13px;line-height:15px;color:#000;"><i style="left:0.00px;transform:scaleX(0.803)">S</i><i style="left:6.96px;transform:scaleX(0.853)">E</i><i style="left:14.36px;transform:scaleX(0.908)">K</i></span>
<span class="t" style="left:824.50px;top:392.00px;font-size:13px;line-height:15px;color:#000;"><i style="left:0.00px;transform:scaleX(0.803)">S</i><i style="left:6.96px;transform:scaleX(0.950)">B</i><i style="left:15.20px;transform:scaleX(0.877)">F</i><i style="left:22.16px;transform:scaleX(0.907)">X</i></span>
<span class="t" style="left:27.80px;top:412.00px;font-size:13px;line-height:15px;color:#000;"><i style="left:0.00px;transform:scaleX(0.853)">E</i><i style="left:7.40px;transform:scaleX(1.035)">U</i><i style="left:17.12px;transform:scaleX(0.876)">R</i><i style="left:25.34px;transform:scaleX(0.930)">T</i><i style="left:32.73px;transform:scaleX(0.876)">R</i><i style="left:40.95px;transform:scaleX(0.851)">Y</i></span>
<span class="t" style="left:195.70px;top:412.00px;font-size:13px;line-height:15px;color:#000;"><i style="left:0.00px;transform:scaleX(0.877)">F</i><i style="left:6.96px;transform:scaleX(1.009)">x</i><i style="left:13.52px;transform:scaleX(0.803)">S</i><i style="left:20.48px;transform:scaleX(1.101)">p</i><i style="left:28.44px;transform:scaleX(1.105)">o</i><i style="left:36.43px;transform:scaleX(1.405)">t</i></span>
<span class="t" style="left:322.81px;top:412.00px;font-size:13px;line-height:15px;color:#000;"><i style="left:0.00px;transform:scaleX(1.062)">1</i><i style="left:7.68px;transform:scaleX(1.062)">3</i><i style="left:15.36px;transform:scaleX(1.062)">9</i><i style="left:23.04px;transform:scaleX(1.062)">2</i><i style="left:30.71px;transform:scaleX(1.062)">7</i></span>
<span class="t" style="left:366.60px;top:412.00px;font-size:13px;line-height:15px;color:#000;"><i style="left:0.00px;transform:scaleX(0.853)">E</i><i style="left:7.40px;transform:scaleX(1.101)">u</i><i style="left:15.36px;transform:scaleX(1.220)">r</i><i style="left:20.64px;transform:scaleX(1.105)">o</i><i style="left:28.63px;transform:scaleX(1.620)">/</i><i style="left:34.48px;transform:scaleX(0.930)">T</i><i style="left:41.86px;transform:scaleX(1.101)">u</i><i style="left:49.82px;transform:scaleX(1.220)">r</i><i style="left:55.10px;transform:scaleX(1.060)">k</i><i style="left:61.99px;transform:scaleX(1.204)">i</i><i style="left:65.47px;transform:scaleX(0.912)">s</i><i style="left:71.39px;transform:scaleX(1.101)">h</i><i style="left:82.78px;transform:scaleX(0.881)">L</i><i style="left:89.15px;transform:scaleX(1.204)">i</i><i style="left:92.62px;transform:scaleX(1.220)">r</i><i style="left:97.91px;transform:scaleX(1.004)">a</i></span>
<span class="t" style="left:720.10px;top:412.00px;font-size:13px;line-height:15px;color:#000;"><i style="left:0.00px;transform:scaleX(0.930)">T</i><i style="left:7.38px;transform:scaleX(0.876)">R</i><i style="left:15.61px;transform:scaleX(0.851)">Y</i></span>
<span class="t" style="left:824.50px;top:412.00px;font-size:13px;line-height:15px;color:#000;"><i style="left:0.00px;transform:scaleX(0.803)">S</i><i style="left:6.96px;transform:scaleX(0.950)">B</i><i style="left:15.20px;transform:scaleX(0.877)">F</i><i style="left:22.16px;transform:scaleX(0.907)">X</i></span>
<span class="t" style="left:27.80px;top:432.00px;font-size:13px;line-height:15px;color:#000;"><i style="left:0.00px;transform:scaleX(0.853)">E</i><i style="left:7.40px;transform:scaleX(1.035)">U</i><i style="left:17.12px;transform:scaleX(0.876)">R</i><i style="left:25.34px;transform:scaleX(1.005)">H</i><i style="left:34.78px;transform:scaleX(1.035)">U</i><i style="left:44.50px;transform:scaleX(0.877)">F</i></span>
<span class="t" style="left:195.70px;top:432.00px;font-size:13px;line-height:15px;color:#000;"><i style="left:0.00px;transform:scaleX(0.877)">F</i><i style="left:6.96px;transform:scaleX(1.009)">x</i><i style="left:13.52px;transform:scaleX(0.803)">S</i><i style="left:20.48px;transform:scaleX(1.101)">p</i><i style="left:28.44px;transform:scaleX(1.105)">o</i><i style="left:36.43px;transform:scaleX(1.405)">t</i></span>
<span class="t" style="left:330.49px;top:432.00px;font-size:13px;line-height:15px;color:#000;"><i style="left:0.00px;transform:scaleX(1.062)">2</i><i style="left:7.68px;transform:scaleX(1.062)">0</i><i style="left:15.36px;transform:scaleX(1.062)">7</i><i style="left:23.04px;transform:scaleX(1.062)">1</i></span>
<span class="t" style="left:366.60px;top:432.00px;font-size:13px;line-height:15px;color:#000;"><i style="left:0.00px;transform:scaleX(0.853)">E</i><i style="left:7.40px;transform:scaleX(1.101)">u</i><i style="left:15.36px;transform:scaleX(1.220)">r</i><i style="left:20.64px;transform:scaleX(1.105)">o</i><i style="left:28.63px;transform:scaleX(1.620)">/</i><i style="left:34.48px;transform:scaleX(1.005)">H</i><i style="left:43.92px;transform:scaleX(1.101)">u</i><i style="left:51.88px;transform:scaleX(1.101)">n</i><i style="left:59.84px;transform:scaleX(0.986)">g</i><i style="left:66.97px;transform:scaleX(1.004)">a</i><i style="left:74.23px;transform:scaleX(1.220)">r</i><i style="left:79.51px;transform:scaleX(1.204)">i</i><i style="left:82.98px;transform:scaleX(1.004)">a</i><i style="left:90.24px;transform:scaleX(1.101)">n</i><i style="left:101.63px;transform:scaleX(0.877)">F</i><i style="left:108.59px;transform:scaleX(1.105)">o</i><i style="left:116.58px;transform:scaleX(1.220)">r</i><i style="left:121.86px;transform:scaleX(1.204)">i</i><i style="left:125.34px;transform:scaleX(1.101)">n</i><i style="left:133.29px;transform:scaleX(1.405)">t</i></span>
<span class="t" style="left:720.10px;top:432.00px;font-size:13px;line-height:15px;color:#000;"><i style="left:0.00px;transform:scaleX(1.005)">H</i><i style="left:9.44px;transform:scaleX(1.035)">U</i><i style="left:19.16px;transform:scaleX(0.877)">F</i></span>
<span class="t" style="left:824.50px;top:432.00px;font-size:13px;line-height:15px;color:#000;"><i style="left:0.00px;transform:scaleX(0.803)">S</i><i style="left:6.96px;transform:scaleX(0.950)">B</i><i style="left:15.20px;transform:scaleX(0.877)">F</i><i style="left:22.16px;transform:scaleX(0.907)">X</i></span>
<span class="t" style="left:27.80px;top:452.00px;font-size:13px;line-height:15px;color:#000;"><i style="left:0.00px;transform:scaleX(0.853)">E</i><i style="left:7.40px;transform:scaleX(1.035)">U</i><i style="left:17.12px;transform:scaleX(0.876)">R</i><i style="left:25.34px;transform:scaleX(1.196)">M</i><i style="left:38.30px;transform:scaleX(0.907)">X</i><i style="left:46.16px;transform:scaleX(1.042)">N</i></span>
<span class="t" style="left:195.70px;top:452.00px;font-size:13px;line-height:15px;color:#000;"><i style="left:0.00px;transform:scaleX(0.877)">F</i><i style="left:6.96px;transform:scaleX(1.009)">x</i><i style="left:13.52px;transform:scaleX(0.803)">S</i><i style="left:20.48px;transform:scaleX(1.101)">p</i><i style="left:28.44px;transform:scaleX(1.105)">o</i><i style="left:36.43px;transform:scaleX(1.405)">t</i></span>
<span class="t" style="left:330.49px;top:452.00px;font-size:13px;line-height:15px;color:#000;"><i style="left:0.00px;transform:scaleX(1.062)">2</i><i style="left:7.68px;transform:scaleX(1.062)">8</i><i style="left:15.36px;transform:scaleX(1.062)">7</i><i style="left:23.04px;transform:scaleX(1.062)">1</i></span>
<span class="t" style="left:366.60px;top:452.00px;font-size:13px;line-height:15px;color:#000;"><i style="left:0.00px;transform:scaleX(0.853)">E</i><i style="left:7.40px;transform:scaleX(1.101)">u</i><i style="left:15.36px;transform:scaleX(1.220)">r</i><i style="left:20.64px;transform:scaleX(1.105)">o</i><i style="left:28.63px;transform:scaleX(1.620)">/</i><i style="left:34.48px;transform:scaleX(1.196)">M</i><i style="left:47.43px;transform:scaleX(1.043)">e</i><i style="left:54.97px;transform:scaleX(1.009)">x</i><i style="left:61.53px;transform:scaleX(1.204)">i</i><i style="left:65.01px;transform:scaleX(0.986)">c</i><i style="left:71.42px;transform:scaleX(1.004)">a</i><i style="left:78.67px;transform:scaleX(1.101)">n</i><i style="left:90.06px;transform:scaleX(0.903)">P</i><i style="left:97.88px;transform:scaleX(1.043)">e</i><i style="left:105.42px;transform:scaleX(0.912)">s</i><i style="left:111.35px;transform:scaleX(1.105)">o</i><i style="left:119.34px;transform:scaleX(0.912)">s</i></span>
<span class="t" style="left:720.10px;top:452.00px;font-size:13px;line-height:15px;color:#000;"><i style="left:0.00px;transform:scaleX(1.196)">M</i><i style="left:12.95px;transform:scaleX(0.907)">X</i><i style="left:20.82px;transform:scaleX(1.042)">N</i></span>
<span class="t" style="left:824.50px;top:452.00px;font-size:13px;line-height:15px;color:#000;"><i style="left:0.00px;transform:scaleX(0.803)">S</i><i style="left:6.96px;transform:scaleX(0.950)">B</i><i style="left:15.20px;transform:scaleX(0.877)">F</i><i style="left:22.16px;transform:scaleX(0.907)">X</i></span>
</body></html>
